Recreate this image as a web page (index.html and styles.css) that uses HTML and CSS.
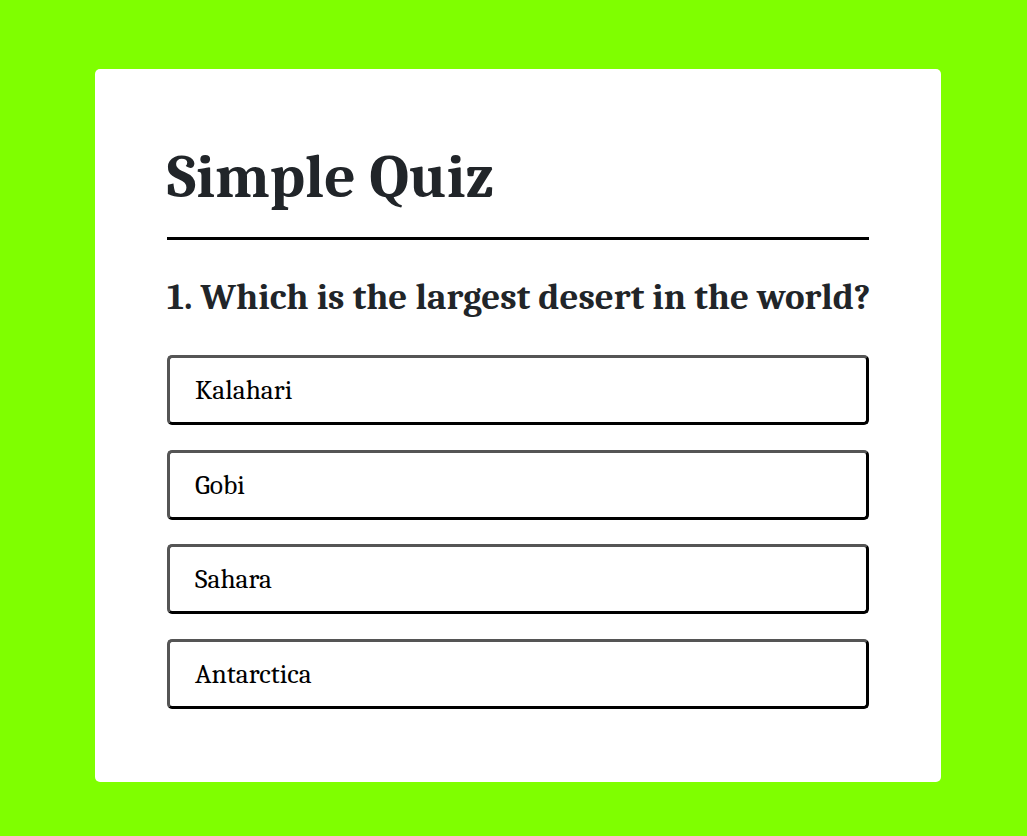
FILE: index.html
```html
<!DOCTYPE html>
<html lang="en">
<head>
<meta charset="utf-8">
<title>Simple Quiz</title>
<link rel="stylesheet" href="styles.css">
</head>
<body>
<div class="page">
  <div class="card">
    <h1 class="title">Simple Quiz</h1>
    <div class="quiz">
      <h2 class="question">1. Which is the largest desert in the world?</h2>
      <div class="answers">
        <button class="answer">Kalahari</button>
        <button class="answer">Gobi</button>
        <button class="answer">Sahara</button>
        <button class="answer">Antarctica</button>
      </div>
    </div>
  </div>
</div>
</body>
</html>
```
FILE: styles.css
```css
* { box-sizing: border-box; }
html, body { margin: 0; padding: 0; }
body {
  background: #7fff00;
  font-family: Cambria, Caladea, "Liberation Serif", serif;
}
.page {
  padding: 69px 86px 55px 95px;
}
.card {
  width: 846px;
  background: #fff;
  border-radius: 5px;
  padding: 72px 72px 73px 72px;
}
.title {
  margin: 0;
  font-size: 61.5px;
  line-height: 72px;
  font-weight: bold;
  color: #212529;
  padding-bottom: 24px;
  border-bottom: 3px solid #000;
}
.quiz {
  padding-top: 35px;
}
.question {
  margin: 0 0 36px;
  font-size: 37px;
  line-height: 44px;
  font-weight: bold;
  color: #212529;
  white-space: nowrap;
}
.answers {
  display: flex;
  flex-direction: column;
  gap: 24.67px;
}
.answer {
  display: block;
  width: 100%;
  height: 70px;
  text-align: left;
  font-family: inherit;
  font-size: 27.5px;
  color: #000;
  background: #fff;
  padding: 0 25px;
  border-width: 3px;
  border-style: solid;
  border-color: #555 #000 #000 #555;
  border-radius: 5px;
}
```
